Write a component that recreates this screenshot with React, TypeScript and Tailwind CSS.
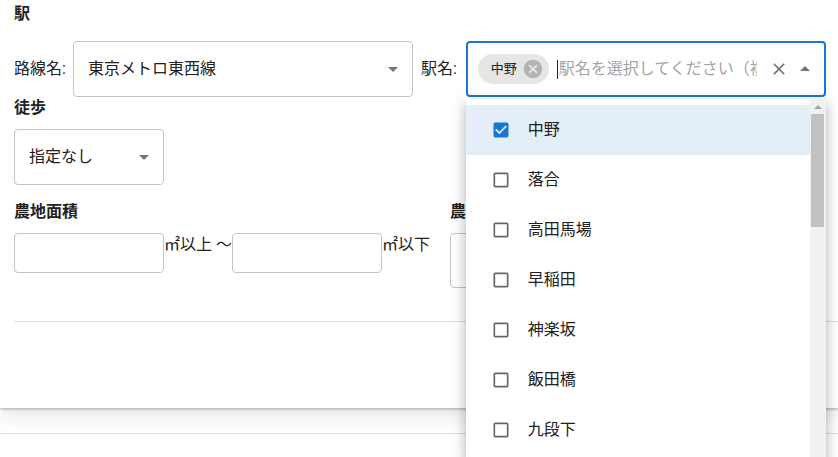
import React from "react";

const ArrowDrop = ({ up = false }: { up?: boolean }) => (
  <svg width="24" height="24" viewBox="0 0 24 24" className="shrink-0" style={{ transform: up ? "rotate(180deg)" : undefined }}>
    <path d="M7 10l5 5 5-5z" fill="#757575" />
  </svg>
);

const CheckedBox = () => (
  <svg width="20" height="20" viewBox="0 0 24 24" className="shrink-0">
    <path
      fill="#1976d2"
      d="M19 3H5c-1.11 0-2 .9-2 2v14c0 1.1.89 2 2 2h14c1.11 0 2-.9 2-2V5c0-1.1-.89-2-2-2zm-9 14l-5-5 1.41-1.41L10 14.17l7.59-7.59L19 8l-9 9z"
    />
  </svg>
);

const EmptyBox = () => (
  <svg width="20" height="20" viewBox="0 0 24 24" className="shrink-0">
    <path
      fill="#666666"
      d="M19 5v14H5V5h14m0-2H5c-1.1 0-2 .9-2 2v14c0 1.1.9 2 2 2h14c1.1 0 2-.9 2-2V5c0-1.1-.9-2-2-2z"
    />
  </svg>
);

const stations = ["中野", "落合", "高田馬場", "早稲田", "神楽坂", "飯田橋", "九段下"];

export default function App() {
  return (
    <div className="relative h-[457px] w-[838px] overflow-hidden bg-white font-[Roboto,'Noto_Sans_CJK_JP',sans-serif] text-[#222]">
      <div className="h-[408px] bg-white pl-[14px] pt-[3px] shadow-[0_1px_3px_rgba(0,0,0,0.3),0_8px_20px_rgba(0,0,0,0.1)]">
        <h3 className="text-[16px] font-bold leading-[22px]">駅</h3>

        <div className="mt-[16px] flex h-[56px] items-center">
          <span className="mr-[7px] text-[16px] leading-[24px]">路線名:</span>
          <div className="flex h-[56px] w-[340px] items-center justify-between rounded-[4px] border border-[#c4c4c4] pl-[14px] pr-[7px]">
            <span className="text-[16px] leading-[24px] text-[#212121]">東京メトロ東西線</span>
            <ArrowDrop />
          </div>
          <span className="ml-[8px] mr-[9px] text-[16px] leading-[24px]">駅名:</span>
          <div className="relative flex h-[56px] w-[360px] items-center rounded-[4px] border-2 border-[#1976d2] pl-[10px] pr-[7px]">
            <div className="flex h-[30px] shrink-0 items-center rounded-full bg-[#e6e6e6] pl-[13px] pr-[5px]">
              <span className="text-[13px] leading-[18px] text-[#212121]">中野</span>
              <svg width="22" height="22" viewBox="0 0 24 24" className="ml-[5px]">
                <path
                  fill="#b3b3b3"
                  d="M12 2C6.47 2 2 6.47 2 12s4.47 10 10 10 10-4.47 10-10S17.53 2 12 2zm5 13.59L15.59 17 12 13.41 8.41 17 7 15.59 10.59 12 7 8.41 8.41 7 12 10.59 15.59 7 17 8.41 13.41 12 17 15.59z"
                />
              </svg>
            </div>
            <div className="ml-[8px] flex min-w-0 flex-1 items-center overflow-hidden whitespace-nowrap">
              <span className="h-[19px] w-px shrink-0 bg-[#222]" />
              <span className="ml-[1px] text-[16px] leading-[24px] text-[#a4a4a4]">駅名を選択してください（複数選択可）</span>
            </div>
            <svg width="20" height="20" viewBox="0 0 24 24" className="ml-[12px] shrink-0">
              <path
                fill="#757575"
                d="M19 6.41 17.59 5 12 10.59 6.41 5 5 6.41 10.59 12 5 17.59 6.41 19 12 13.41 17.59 19 19 17.59 13.41 12z"
              />
            </svg>
            <span className="ml-[4px] flex">
              <ArrowDrop up />
            </span>

            <div className="absolute left-[-2px] top-[56px] z-10 flex h-[362px] w-[360px] bg-white shadow-[0_5px_5px_-3px_rgba(0,0,0,0.2),0_8px_10px_1px_rgba(0,0,0,0.14),0_3px_14px_2px_rgba(0,0,0,0.12)]">
              <ul className="min-w-0 flex-1 pt-[6px]">
                {stations.map((s, i) => (
                  <li
                    key={s}
                    className={`flex h-[50px] items-center pl-[25px] ${i === 0 ? "bg-[#e3eef8]" : ""}`}
                  >
                    {i === 0 ? <CheckedBox /> : <EmptyBox />}
                    <span className="ml-[17px] text-[16px] leading-[24px] text-[#212121]">{s}</span>
                  </li>
                ))}
              </ul>
              <div className="flex w-[16px] shrink-0 flex-col items-center bg-[#f1f1f1]">
                <div className="flex h-[15px] items-center justify-center">
                  <div className="h-0 w-0 border-x-[4px] border-b-[4px] border-x-transparent border-b-[#a3a3a3]" />
                </div>
                <div className="h-[113px] w-[13px] bg-[#c1c1c1]" />
              </div>
            </div>
          </div>
        </div>

        <h3 className="text-[16px] font-bold leading-[22px]">徒歩</h3>
        <div className="mt-[10px] flex h-[56px] w-[150px] items-center justify-between rounded-[4px] border border-[#c4c4c4] pl-[14px] pr-[7px]">
          <span className="text-[16px] leading-[24px] text-[#212121]">指定なし</span>
          <ArrowDrop />
        </div>

        <div className="mt-[16px] flex gap-[14px]">
          <div className="w-[422px]">
            <h3 className="text-[16px] font-bold leading-[22px]">農地面積</h3>
            <div className="mt-[10px] flex items-start">
              <div className="h-[40px] w-[150px] rounded-[4px] border border-[#c4c4c4]" />
              <span className="text-[16px] leading-[24px]">㎡以上 ～</span>
              <div className="h-[40px] w-[150px] rounded-[4px] border border-[#c4c4c4]" />
              <span className="text-[16px] leading-[24px]">㎡以下</span>
            </div>
          </div>
          <div>
            <h3 className="text-[16px] font-bold leading-[22px]">農地区分</h3>
            <div className="mt-[10px] h-[55px] w-[150px] rounded-[4px] border border-[#c4c4c4]" />
          </div>
        </div>

        <div className="mt-[33px] h-px bg-[#dcdcdc]" />
      </div>

      <div className="mt-[25px] h-[30px] border-t border-[#dcdcdc] bg-white" />
    </div>
  );
}
